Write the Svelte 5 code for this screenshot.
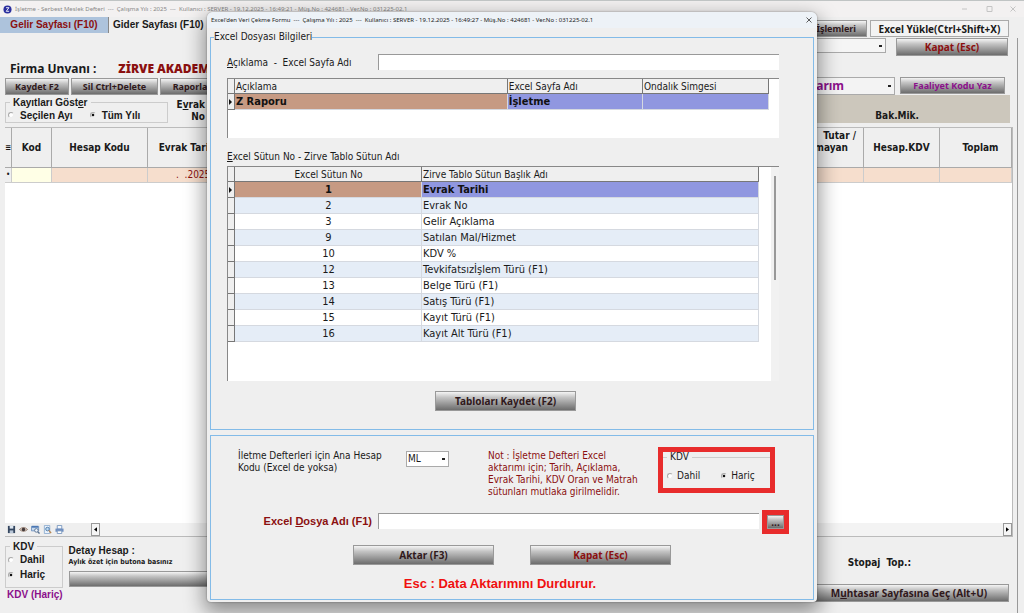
<script lang="ts">
  interface Column { no: number; title: string }

  const session = 'Çalışma Yılı : 2025  ---  Kullanıcı : SERVER - 19.12.2025';
  const version = 'Müş.No : 424681 - Ver.No : 031225-02.1';

  const columns: Column[] = [
    { no: 1, title: 'Evrak Tarihi' },
    { no: 2, title: 'Evrak No' },
    { no: 3, title: 'Gelir Açıklama' },
    { no: 9, title: 'Satılan Mal/Hizmet' },
    { no: 10, title: 'KDV %' },
    { no: 12, title: 'Tevkifatsızİşlem Türü (F1)' },
    { no: 13, title: 'Belge Türü (F1)' },
    { no: 14, title: 'Satış Türü (F1)' },
    { no: 15, title: 'Kayıt Türü (F1)' },
    { no: 16, title: 'Kayıt Alt Türü (F1)' },
  ];

  let selected = $state(1);
  let period = $state('all');
  let pageVat = $state('haric');
  let importVat = $state('haric');
  let sheetName = $state('');
  let fileName = $state('');
</script>

<div class="window">
  <header class="titlebar">
    <svg class="logo" viewBox="0 0 10 10" aria-hidden="true">
      <circle cx="5" cy="5" r="4.5" fill="#2b2f9e" />
      <path d="M3.4 3h3.2L3.6 7h3.2" fill="none" stroke="#fff" stroke-width="1" />
    </svg>
    <span class="caption">İşletme - Serbest Meslek Defteri  ---  {session} - 16:49:21 - {version}</span>
    <svg class="window-buttons" viewBox="0 0 54 8" aria-hidden="true">
      <path d="M0 4h5M25 1.500h5v5h-5zM48.500 1.500l5 5M53.500 1.500l-5 5" fill="none" stroke="#c4c4c4" stroke-width="1" />
    </svg>
  </header>

  <div class="top">
    <nav class="tabs">
      <button class="tab active">Gelir Sayfası (F10)</button>
      <button class="tab">Gider Sayfası (F10)</button>
    </nav>
    <div class="top-right">
      <button class="metal small ops">İşlemleri</button>
      <button class="flat">Excel Yükle(Ctrl+Shift+X)</button>
    </div>
  </div>

  <main class="main">
    <div class="header">
      <div class="header-left">
        <div class="company">
          <span>Firma Unvanı :</span>
          <strong>ZİRVE AKADEMİ</strong>
        </div>
        <div class="actions">
          <button class="metal small">Kaydet F2</button>
          <button class="metal small wide">Sil Ctrl+Delete</button>
          <button class="metal small">Raporlar</button>
        </div>
        <div class="filters">
          <fieldset class="group period">
            <legend>Kayıtları Göst<u>e</u>r</legend>
            <label><input type="radio" value="month" bind:group={period} />Seçilen Ayı</label>
            <label><input type="radio" value="all" bind:group={period} />Tüm Yılı</label>
          </fieldset>
          <span class="doc-no">E<u>v</u>rak<br />No</span>
        </div>
      </div>
      <div class="header-right">
        <div class="line first">
          <select class="combo blank" aria-label="Liste"><option></option></select>
          <button class="metal red close-page">Kapat (Esc)</button>
        </div>
        <div class="line">
          <select class="combo activity" aria-label="Faaliyet"><option>tarım</option></select>
          <button class="metal small purple code">Faaliyet Kodu Yaz</button>
        </div>
        <div class="khaki">Bak.Mik.</div>
      </div>
    </div>

    <div class="ledger">
      <table>
        <colgroup>
          <col class="c-mark" /><col class="c-kod" /><col class="c-hesap" /><col class="c-tarih" />
          <col /><col class="c-tutar" /><col class="c-kdv" /><col class="c-toplam" />
        </colgroup>
        <thead>
          <tr>
            <th class="mark">≡</th>
            <th>Kod</th>
            <th>Hesap Kodu</th>
            <th>Evrak Tarihi</th>
            <th></th>
            <th class="split">Tutar /<br /><span>mayan</span></th>
            <th>Hesap.KDV</th>
            <th class="total">Toplam</th>
          </tr>
        </thead>
        <tbody>
          <tr>
            <td class="mark">•</td>
            <td class="code-cell"></td>
            <td></td>
            <td class="date">.&nbsp; .2025</td>
            <td></td>
            <td></td>
            <td></td>
            <td></td>
          </tr>
        </tbody>
      </table>
      <div class="scrollbar">
        <div class="tools">
          <svg viewBox="0 0 10 10" aria-hidden="true">
            <path d="M1 1h8v8H1z" fill="#34465f" /><path d="M3 1h4v3H3z" fill="#dfe8f2" /><path d="M3 6h4v3H3z" fill="#b9c7d8" />
          </svg>
          <svg viewBox="0 0 10 10" aria-hidden="true">
            <path d="M0.500 5Q5 0.500 9.500 5Q5 9 0.500 5z" fill="#e8d9cd" stroke="#8c7568" /><circle cx="5" cy="5" r="2" fill="#433a3a" />
          </svg>
          <svg viewBox="0 0 10 10" aria-hidden="true">
            <path d="M0.500 1.500h8v5h-8z" fill="#c8daee" stroke="#6b8fbd" /><path d="M1 2h7" stroke="#4c78b3" stroke-width="2" /><circle cx="6" cy="6" r="2" fill="#eef5fc" stroke="#5a7392" /><path d="M7.500 7.500l2 2" stroke="#5a7392" stroke-width="1.500" />
          </svg>
          <svg viewBox="0 0 10 10" aria-hidden="true">
            <path d="M1.500 0.500h6v9h-6z" fill="#e9f1fa" stroke="#8faed0" /><circle cx="5" cy="4.500" r="2" fill="#bcd9f1" stroke="#4b78aa" /><path d="M6.500 6l2.500 3" stroke="#b88650" stroke-width="1.500" />
          </svg>
          <svg viewBox="0 0 10 10" aria-hidden="true">
            <path d="M2.500 0.500h5v4h-5z" fill="#f4f8fd" stroke="#7896bd" /><path d="M0.500 4h9v3.500h-9z" fill="#6f8fc0" /><path d="M2.500 6.500h5v3h-5z" fill="#fff" stroke="#7896bd" />
          </svg>
        </div>
        <button class="arrow" aria-label="Sola"><svg viewBox="0 0 4 6"><path d="M4 0v6L0 3z" /></svg></button>
        <div class="track"></div>
        <button class="arrow" aria-label="Sağa"><svg viewBox="0 0 4 6"><path d="M0 0v6l4-3z" /></svg></button>
      </div>
    </div>

    <footer class="footer">
      <div class="footer-left">
        <div>
          <fieldset class="group vat">
            <legend>KDV</legend>
            <label><input type="radio" value="dahil" bind:group={pageVat} />Dahil</label>
            <label><input type="radio" value="haric" bind:group={pageVat} />Hariç</label>
          </fieldset>
          <p class="vat-state">KDV (Hariç)</p>
        </div>
        <div class="detail">
          <p class="detail-title">Detay Hesap :</p>
          <p class="detail-hint">Aylık özet için butona basınız</p>
          <button class="metal detail-button" aria-label="Detay Hesap"></button>
        </div>
      </div>
      <div class="footer-right">
        <p class="stopaj">Stopaj&nbsp; Top.:</p>
        <button class="metal summary">M<u>u</u>htasar Sayfasına Geç (Alt+U)</button>
      </div>
    </footer>
  </main>

  <div class="dialog" role="dialog" aria-label="Excel'den Veri Çekme Formu">
    <div class="dialog-title">
      <span class="caption">Excel'den Veri Çekme Formu  ---  {session} - 16:49:27 - {version}</span>
      <button class="dialog-close" aria-label="Kapat">
        <svg viewBox="0 0 6 6"><path d="M0.500 0.500l5 5M5.500 0.500l-5 5" fill="none" stroke="#333" stroke-width="0.800" /></svg>
      </button>
    </div>

    <fieldset class="panel info">
      <legend>Excel Dosyası Bilgileri</legend>

      <div class="sheet-row">
        <label for="sheet"><u>A</u>çıklama&nbsp; -&nbsp; Excel Sayfa Adı</label>
        <input id="sheet" class="text" type="text" bind:value={sheetName} />
      </div>

      <div class="grid sheets">
        <table>
          <colgroup><col class="c-ind" /><col /><col class="c-sheet" /><col class="c-symbol" /></colgroup>
          <thead>
            <tr><th></th><th>Açıklama</th><th>Excel Sayfa Adı</th><th>Ondalık Simgesi</th></tr>
          </thead>
          <tbody>
            <tr class="current">
              <td class="ind"><i></i></td>
              <td>Z Raporu</td>
              <td>İşletme</td>
              <td></td>
            </tr>
          </tbody>
        </table>
      </div>

      <p class="grid-label"><u>E</u>xcel Sütun No - Zirve Tablo Sütun Adı</p>
      <div class="grid mapping">
        <table>
          <colgroup><col class="c-ind" /><col class="c-no" /><col /></colgroup>
          <thead>
            <tr><th></th><th class="no">Excel Sütun No</th><th>Zirve Tablo Sütun Başlık Adı</th></tr>
          </thead>
          <tbody>
            {#each columns as column (column.no)}
              <tr class:current={column.no === selected} onclick={() => (selected = column.no)}>
                <td class="ind">{#if column.no === selected}<i></i>{/if}</td>
                <td class="no">{column.no}</td>
                <td>{column.title}</td>
              </tr>
            {/each}
          </tbody>
        </table>
        <div class="vscroll"><div class="thumb"></div></div>
      </div>

      <button class="metal save">Tabloları Kaydet (F2)</button>
    </fieldset>

    <section class="panel transfer">
      <div class="options">
        <label for="account">İletme Defterleri için Ana Hesap<br />Kodu (Excel de yoksa)</label>
        <select id="account" class="combo account"><option>ML</option></select>
        <p class="note">Not : İşletme Defteri Excel<br />aktarımı için; Tarih, Açıklama,<br />Evrak Tarihi, KDV Oran ve Matrah<br />sütunları mutlaka girilmelidir.</p>
        <div class="marked">
          <fieldset class="import-vat">
            <legend>KDV</legend>
            <label><input type="radio" value="dahil" bind:group={importVat} />Dahil</label>
            <label><input type="radio" value="haric" bind:group={importVat} />Hariç</label>
          </fieldset>
        </div>
      </div>

      <div class="file-row">
        <label for="file">Excel <u>D</u>osya Adı (F1)</label>
        <input id="file" class="text" type="text" bind:value={fileName} />
        <div class="marked browse"><button class="metal" aria-label="Dosya seç">...</button></div>
      </div>

      <div class="buttons">
        <button class="metal">Aktar (F3)</button>
        <button class="metal red">Kapat (Esc)</button>
      </div>
      <p class="esc">Esc : Data Aktarımını Durdurur.</p>
    </section>
  </div>
</div>

<style>
  :global(body) {
    background: #efefef;
  }

  .window, .window * {
    box-sizing: border-box;
  }

  .window {
    position: relative;
    display: flex;
    flex-direction: column;
    min-height: 100vh;
    overflow: hidden;
    background: #efefef;
    border-top: 1px solid #c0c4c4;
    font: 10px/14px "DejaVu Sans Condensed", "DejaVu Sans", sans-serif;
    color: #1a1a1a;
  }

  p {
    margin: 0;
  }

  button, input, select {
    margin: 0;
    padding: 0;
    font: inherit;
    color: inherit;
  }

  fieldset {
    min-width: 0;
    margin: 0;
  }

  table {
    border-collapse: separate;
    border-spacing: 0;
    table-layout: fixed;
  }

  th, td {
    padding: 0;
  }

  .titlebar {
    display: flex;
    align-items: center;
    height: 16px;
    padding: 0 8px 0 3px;
    background: #f3f1f1;
    color: #888;
  }

  .logo {
    width: 9px;
    height: 9px;
    margin-right: 3px;
  }

  .window-buttons {
    width: 54px;
    height: 8px;
    margin-left: auto;
  }

  .caption {
    font: 6px/10px "Noto Sans", sans-serif;
    white-space: pre;
  }

  .top {
    display: flex;
    justify-content: space-between;
    height: 21px;
    padding-right: 15px;
  }

  .tabs {
    display: flex;
    height: 16px;
  }

  .tab {
    padding: 0 4px;
    border: 0;
    background: none;
    font: bold 10px/16px "Liberation Sans", sans-serif;
    white-space: nowrap;
  }

  .tab.active {
    width: 109px;
    padding-bottom: 3px;
    border-right: 1px solid #888;
    background: #adc3dc;
    color: #8b1010;
  }

  .top-right {
    display: flex;
    gap: 3px;
    padding-top: 3px;
  }

  .metal {
    height: 17px;
    border: 1px solid #999;
    background: linear-gradient(#f4f4f4, #c4c4c4 30%, #6d6d6d);
    font: bold 10px/14px "Noto Sans", sans-serif;
    color: #30191c;
    text-align: center;
    white-space: nowrap;
  }

  .metal.small {
    font-size: 9px;
  }

  .metal.red {
    color: #8b1010;
  }

  .metal.purple {
    color: #8b108b;
  }

  .ops {
    width: 120px;
    padding-right: 10px;
    text-align: right;
  }

  .flat {
    width: 139px;
    height: 17px;
    border: 1px solid #aaa;
    background: #f3f3f3;
    font: bold 10px/14px "Noto Sans", sans-serif;
    white-space: nowrap;
  }

  .main {
    flex: 1;
    display: flex;
    flex-direction: column;
    margin-right: 6px;
    padding: 0 4px 0 5px;
    border-right: 1px solid #999;
  }

  .header {
    display: flex;
    justify-content: space-between;
    height: 89px;
  }

  .header-left {
    padding-top: 24px;
  }

  .company {
    display: flex;
    gap: 22px;
    padding-left: 5px;
    font: bold 12px/14px "Noto Sans", sans-serif;
    white-space: nowrap;
  }

  .company strong {
    color: #8b1010;
  }

  .actions {
    display: flex;
    gap: 2px;
    margin-top: 2px;
  }

  .actions .metal {
    width: 64px;
  }

  .actions .wide {
    width: 87px;
  }

  .filters {
    display: flex;
    align-items: flex-end;
    margin-top: 2px;
  }

  .group {
    padding: 0 2px;
    border: 1px solid #ccc;
    font: bold 10px/11px "Liberation Sans", sans-serif;
  }

  .group legend {
    margin-left: 2px;
    padding: 0 3px;
  }

  .group label {
    display: flex;
    align-items: center;
    gap: 6px;
  }

  .period {
    display: flex;
    gap: 17px;
    width: 163px;
    height: 26px;
  }

  .doc-no {
    width: 37px;
    text-align: right;
    font: bold 10px/12px "DejaVu Sans Condensed", "DejaVu Sans", sans-serif;
  }

  input[type="radio"] {
    appearance: none;
    width: 6px;
    height: 6px;
    border: 1px solid #aaa;
    border-right-color: #eee;
    border-bottom-color: #eee;
    border-radius: 50%;
    background: #fff;
  }

  input[type="radio"]:checked {
    background: radial-gradient(circle, #111 40%, #fff 60%);
  }

  .header-right {
    width: 260px;
    margin-right: 3px;
  }

  .line {
    display: flex;
    align-items: flex-start;
    justify-content: flex-end;
    gap: 5px;
  }

  .line.first {
    gap: 10px;
    height: 39px;
    padding-right: 2px;
  }

  .combo {
    appearance: none;
    border: 1px solid #aaa;
    border-radius: 0;
    background: #fff linear-gradient(#222, #222) no-repeat right 3px center / 3px 2px;
  }

  .blank {
    width: 120px;
    height: 15px;
    background-color: #f5f5f5;
  }

  .close-page {
    width: 112px;
    height: 18px;
  }

  .activity {
    width: 110px;
    height: 18px;
    padding-left: 25px;
    background-color: #f3f3f3;
    font: bold 12px/14px "Noto Sans", sans-serif;
    color: #8b108b;
  }

  .code {
    width: 105px;
    margin-right: 5px;
  }

  .khaki {
    height: 28px;
    padding: 14px 91px 0 0;
    background: #ccc7bc;
    font: bold 10px/14px "DejaVu Sans Condensed", "DejaVu Sans", sans-serif;
    text-align: right;
  }

  .ledger {
    flex: 1;
    display: flex;
    flex-direction: column;
    background: #fff;
    border: 1px solid #bbb;
    border-width: 1px 1px 1px 0;
  }

  .ledger table {
    width: 100%;
  }

  .ledger th {
    height: 40px;
    border-right: 1px solid #aaa;
    border-bottom: 1px solid #aaa;
    background: #efefef;
    font: bold 10px/12px "DejaVu Sans Condensed", "DejaVu Sans", sans-serif;
    white-space: nowrap;
  }

  .ledger td {
    height: 15px;
    border-right: 1px solid #ccc;
    border-bottom: 1px solid #ccc;
    background: #f6decd;
    font: 10px/12px "DejaVu Sans Condensed", "DejaVu Sans", sans-serif;
  }

  .ledger .mark {
    background: #efefef;
    font-size: 8px;
    text-align: center;
  }

  .ledger .code-cell {
    background: #ffffe6;
  }

  .ledger .date {
    padding-left: 28px;
    color: #8b1010;
  }

  .ledger .split {
    padding: 0 7px 12px 0;
    text-align: right;
  }

  .ledger .split span {
    padding-right: 8px;
  }

  .ledger .total {
    padding-left: 10px;
  }

  .c-mark { width: 7px; }
  .c-kod { width: 40px; }
  .c-hesap { width: 96px; }
  .c-tarih { width: 82px; }
  .c-tutar { width: 80px; }
  .c-kdv { width: 76px; }
  .c-toplam { width: 72px; }

  .scrollbar {
    display: flex;
    height: 13px;
    margin-top: auto;
    background: #f3f3f3;
  }

  .tools {
    display: flex;
    align-items: center;
    gap: 3px;
    width: 86px;
    padding-left: 2px;
    background: #efefef;
  }

  .tools svg {
    width: 9px;
    height: 9px;
  }

  .arrow {
    display: grid;
    place-items: center;
    width: 9px;
    border: 1px solid #999;
    background: #f5f5f5;
  }

  .arrow svg {
    width: 3px;
    height: 5px;
  }

  .track {
    flex: 1;
  }

  .footer {
    display: flex;
    justify-content: space-between;
    height: 76px;
    padding-right: 4px;
  }

  .footer-left {
    display: flex;
    gap: 4px;
    padding-top: 4px;
  }

  .vat {
    width: 58px;
    height: 47px;
  }

  .vat label {
    height: 15px;
  }

  .vat-state {
    padding: 0 2px;
    font: bold 10px/14px "Liberation Sans", sans-serif;
    color: #8b108b;
  }

  .detail-title {
    padding-top: 3px;
    font: bold 10px/13px "Liberation Sans", sans-serif;
  }

  .detail-hint {
    font: bold 7px/10px "DejaVu Sans Condensed", "DejaVu Sans", sans-serif;
  }

  .detail-button {
    width: 180px;
    height: 16px;
    margin-top: 4px;
  }

  .footer-right {
    display: flex;
    flex-direction: column;
    align-items: flex-end;
    width: 200px;
  }

  .stopaj {
    padding: 19px 98px 0 0;
    font: bold 10px/14px "DejaVu Sans Condensed", "DejaVu Sans", sans-serif;
    white-space: nowrap;
  }

  .summary {
    width: 200px;
    height: 18px;
    margin-top: 14px;
  }

  .dialog {
    position: absolute;
    top: 11px;
    left: 207px;
    right: 207px;
    padding: 0 3px 2px;
    border-radius: 6px 6px 4px 4px;
    background: #efefef;
    box-shadow: 0 0 2px rgba(0, 0, 0, 0.4), 0 8px 20px 3px rgba(0, 0, 0, 0.4);
  }

  .dialog-title {
    display: flex;
    align-items: center;
    justify-content: space-between;
    height: 16px;
    margin: 0 -3px;
    padding: 0 5px 0 4px;
    border-radius: 6px 6px 0 0;
    background: #edf2f7;
    color: #222;
  }

  .dialog-close {
    width: 6px;
    height: 6px;
    border: 0;
    background: none;
  }

  .dialog-close svg {
    display: block;
  }

  .panel {
    border: 1px solid #83bbe8;
  }

  .info {
    margin-top: 2px;
    padding: 10px 34px 18px 16px;
  }

  .info legend {
    padding: 0;
    margin-left: -13px;
  }

  .sheet-row {
    display: grid;
    grid-template-columns: 151px 1fr;
    height: 16px;
    line-height: 18px;
  }

  .text {
    width: 100%;
    height: 16px;
    border: solid #999;
    border-width: 1px 0 0 1px;
    border-radius: 0;
    background: #fff;
  }

  .grid {
    border: solid #888;
    border-width: 1px 0 0 1px;
    background: #fff;
  }

  .sheets {
    height: 60px;
    margin-top: 8px;
  }

  .grid table {
    width: calc(100% - 10px);
  }

  .grid th {
    height: 15px;
    padding-left: 1px;
    border-right: 1px solid #777;
    border-bottom: 1px solid #777;
    background: #efefef;
    line-height: 13px;
    font-weight: normal;
    text-align: left;
    white-space: nowrap;
  }

  .grid td {
    height: 16px;
    padding-left: 1px;
    border-right: 1px solid #d5d9e0;
    border-bottom: 1px solid #d5d9e0;
    font-size: 11px;
    line-height: 13px;
    white-space: nowrap;
  }

  .grid tr:nth-child(even) td {
    background: #e5edf7;
  }

  .grid .no {
    text-align: center;
  }

  .grid .current td {
    background: #9097e0;
    font-weight: bold;
    color: #111;
  }

  .grid .current td:nth-child(2) {
    background: #c69a83;
  }

  .grid tr td.ind {
    padding: 0;
    border-color: #777;
    background: #efefef;
  }

  .ind i {
    display: block;
    width: 0;
    margin-left: 1px;
    border: 3px solid transparent;
    border-left-color: #111;
    border-right: 0;
  }

  .c-ind { width: 7px; }
  .c-sheet { width: 25%; }
  .c-symbol { width: 126px; }
  .c-no { width: 187px; }

  .grid-label {
    margin: 12px 0 2px;
  }

  .mapping {
    display: flex;
    align-items: flex-start;
    height: 215px;
  }

  .mapping table {
    flex: 1;
    margin-right: 12px;
  }

  .vscroll {
    width: 8px;
    height: 214px;
    padding: 9px 3px;
    background: #f1f1f1;
  }

  .thumb {
    width: 2px;
    height: 104px;
    background: #999;
  }

  .save {
    display: block;
    width: 141px;
    height: 20px;
    margin: 10px 0 0 208px;
  }

  .transfer {
    margin-top: 5px;
    padding: 11px 24px 8px;
  }

  .options {
    display: grid;
    grid-template-columns: 140px 43px minmax(0, 1fr) 117px;
    column-gap: 28px;
    align-items: start;
    height: 46px;
    padding: 0 14px 0 3px;
    line-height: 12px;
  }

  .options > label, .note {
    padding-top: 3px;
    white-space: nowrap;
  }

  .account {
    height: 16px;
    margin-top: 4px;
    padding-left: 1px;
  }

  .note {
    padding-left: 11px;
    color: #8b1010;
  }

  .marked {
    border: 5px solid #e82c2c;
  }

  .import-vat {
    display: flex;
    gap: 21px;
    height: 36px;
    padding: 8px 4px 0;
    border: 0 solid #ccc;
    border-top-width: 1px;
  }

  .import-vat legend {
    padding: 0 3px;
    line-height: 10px;
  }

  .import-vat label {
    display: flex;
    align-items: center;
    gap: 4px;
    height: 12px;
  }

  .file-row {
    display: grid;
    grid-template-columns: 137px 1fr 27px;
    align-items: start;
    margin-top: 17px;
  }

  .file-row label {
    padding-top: 4px;
    font: bold 11px/14px "Liberation Sans", sans-serif;
    color: #8b1010;
    text-align: right;
  }

  .file-row .text {
    width: auto;
    margin: 3px 3px 0 6px;
  }

  .browse {
    height: 24px;
  }

  .browse .metal {
    display: block;
    width: 100%;
    height: 14px;
    line-height: 10px;
  }

  .buttons {
    display: flex;
    justify-content: center;
    gap: 36px;
    margin-top: 11px;
  }

  .buttons .metal {
    width: 141px;
    height: 20px;
  }

  .esc {
    margin-top: 12px;
    padding-right: 24px;
    font: bold 13px/14px "Liberation Sans", sans-serif;
    color: #f01010;
    text-align: center;
  }
</style>
